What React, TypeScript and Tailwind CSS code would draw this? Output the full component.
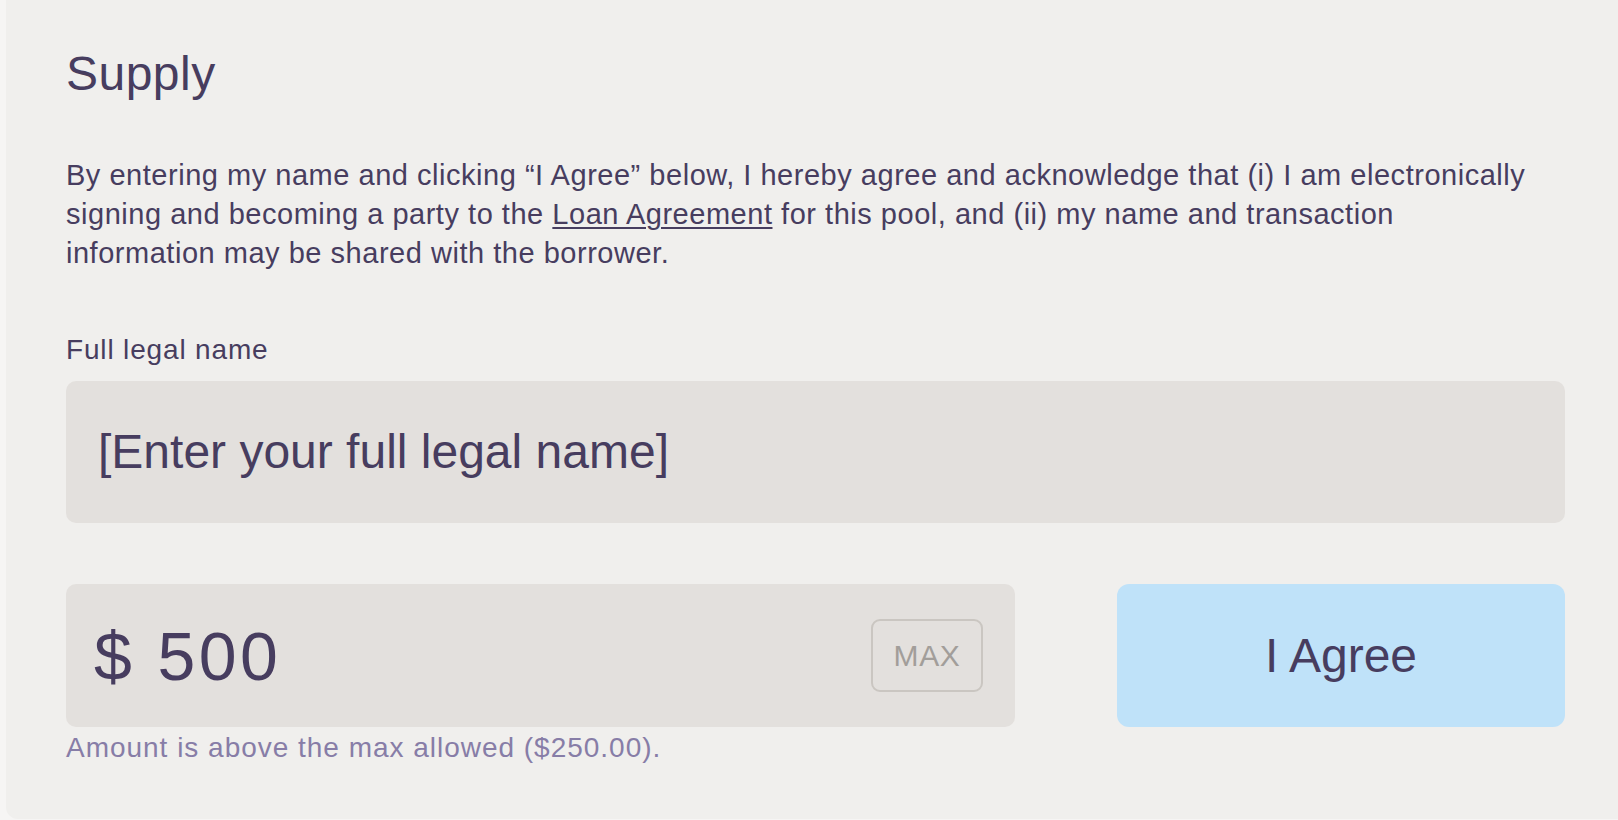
import React from "react";

export default function App() {
  return (
    <div
      className="w-[1618px] h-[820px] overflow-hidden bg-[#f6f5f4] text-[#473d5f]"
      style={{ fontFamily: '"Liberation Sans", Arial, sans-serif' }}
    >
      <div className="ml-[6px] h-[819px] bg-[#f0efed] rounded-bl-[12px] pl-[60px] pr-[53px] pt-[44px] flex flex-col">
        <h1 className="text-[48px] leading-[60px] font-normal tracking-[0.01em]">Supply</h1>
        <p className="mt-[52px] text-[29px] leading-[39px] tracking-[0.018em] whitespace-nowrap">
          By entering my name and clicking “I Agree” below, I hereby agree and acknowledge that (i) I am electronically
          <br />
          signing and becoming a party to the{" "}
          <a className="underline underline-offset-[3px] decoration-[1.5px]">Loan Agreement</a> for this pool, and (ii)
          my name and transaction
          <br />
          information may be shared with the borrower.
        </p>
        <label className="mt-[57px] text-[28px] leading-[39px] tracking-[0.03em]">Full legal name</label>
        <div className="mt-[12px] h-[142px] rounded-[10px] bg-[#e3e0dd] flex items-center pl-[32px]">
          <span className="text-[48px] leading-[60px]">[Enter your full legal name]</span>
        </div>
        <div className="mt-[61px] flex gap-[102px]">
          <div className="flex-1 h-[143px] rounded-[10px] bg-[#e3e0dd] flex items-center justify-between pl-[28px] pr-[32px]">
            <span className="text-[68px] leading-[76px] tracking-[0.05em]">$ 500</span>
            <div className="w-[112px] h-[73px] rounded-[9px] border-2 border-[#cac6c1] flex items-center justify-center text-[30px] text-[#a29e9a] tracking-[0.02em]">
              MAX
            </div>
          </div>
          <button className="w-[448px] h-[143px] rounded-[12px] bg-[#bfe2f9] text-[48px] leading-[60px] text-[#473d5f] flex items-center justify-center">
            I Agree
          </button>
        </div>
        <div className="mt-[1px] text-[28px] leading-[39px] tracking-[0.035em] text-[#877da7]">
          Amount is above the max allowed ($250.00).
        </div>
      </div>
    </div>
  );
}
